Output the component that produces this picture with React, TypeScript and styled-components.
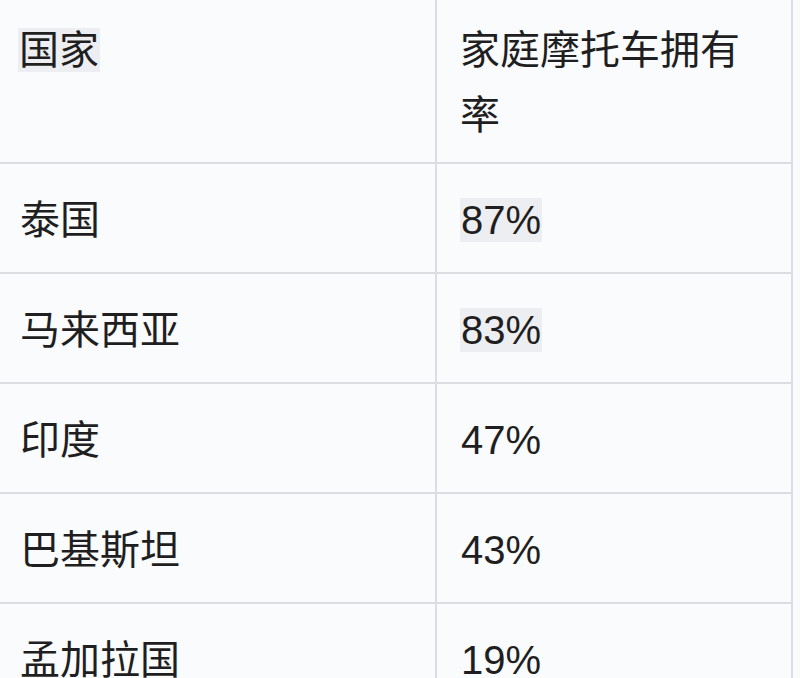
import React from 'react'
import styled, { createGlobalStyle } from 'styled-components'

const GlobalStyle = createGlobalStyle`
  html, body {
    margin: 0;
    padding: 0;
    background: #fafbfd;
  }
  body {
    font-family: "Liberation Sans", "Noto Sans CJK SC", sans-serif;
    color: #1f1f22;
  }
`

const Page = styled.div`
  width: 800px;
  height: 678px;
  overflow: hidden;
`

const Table = styled.table`
  width: 793px;
  border-collapse: collapse;
  table-layout: fixed;
  font-size: 40px;
  line-height: 65px;
`

const HeadCell = styled.th`
  text-align: left;
  font-weight: 400;
  vertical-align: top;
  padding: 18px 20px 14px 20px;
  border-bottom: 2px solid #dcdde2;
  border-right: 2px solid #dcdde2;
  &:first-child {
    width: 397px;
    padding-left: 18px;
  }
  &:last-child {
    padding-left: 23px;
  }
`

const Cell = styled.td`
  padding: 24px 20px 19px 20px;
  vertical-align: middle;
  border-bottom: 2px solid #dcdde2;
  border-right: 2px solid #dcdde2;
  white-space: nowrap;
  &:last-child {
    padding-left: 23px;
  }
`

const Mark = styled.span<{ $hl?: boolean }>`
  background: ${p => (p.$hl ? '#edeef1' : 'transparent')};
  padding: 0 1px;
`

const rows = [
  { name: '泰国', rate: '87%', hl: true },
  { name: '马来西亚', rate: '83%', hl: true },
  { name: '印度', rate: '47%', hl: false },
  { name: '巴基斯坦', rate: '43%', hl: false },
  { name: '孟加拉国', rate: '19%', hl: false },
]

export default function App() {
  return (
    <Page>
      <GlobalStyle />
      <Table>
        <thead>
          <tr>
            <HeadCell><Mark $hl>国家</Mark></HeadCell>
            <HeadCell>家庭摩托车拥有率</HeadCell>
          </tr>
        </thead>
        <tbody>
          {rows.map(r => (
            <tr key={r.name}>
              <Cell>{r.name}</Cell>
              <Cell><Mark $hl={r.hl}>{r.rate}</Mark></Cell>
            </tr>
          ))}
        </tbody>
      </Table>
    </Page>
  )
}
